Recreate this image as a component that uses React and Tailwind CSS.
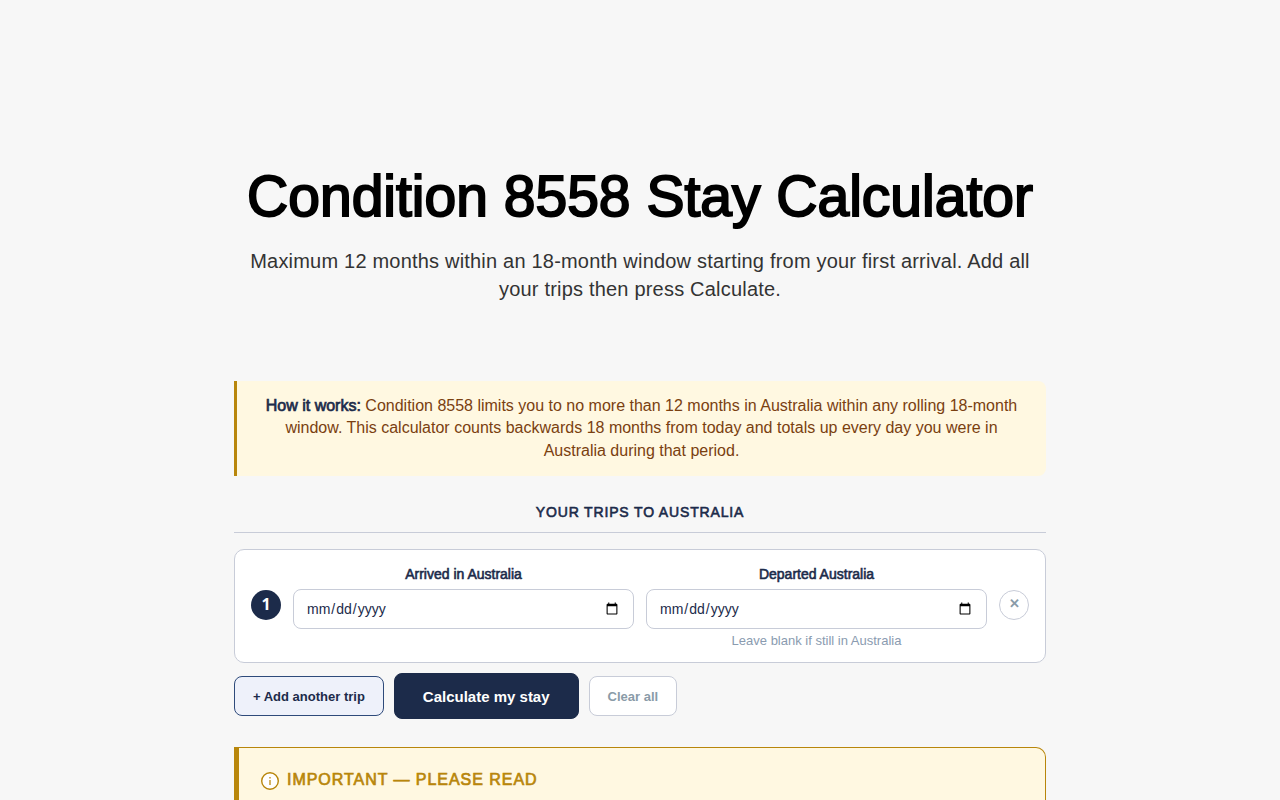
import { useState } from "react";

const DateField = ({ id, label, hint, value, onChange }) => (
    <div className="flex min-w-0 flex-1 flex-col text-center">
        <label htmlFor={id} className="mb-[5px] text-sm leading-5 [-webkit-text-stroke:0.6px]">{label}</label>
        <input
            id={id}
            type="date"
            value={value}
            onChange={onChange}
            className="h-10 w-full rounded-lg border border-[#c8ccd8] bg-white px-3 text-left font-['Liberation_Sans',Arial,sans-serif] text-sm text-[#1c2b4a]"
        />
        <p className="mt-1 h-[15px] text-[13px] leading-[15px] text-[#8a9bb0]">{hint}</p>
    </div>
);

const emptyTrip = { arrived: "", departed: "" };

const App = () => {
    const [trips, setTrips] = useState([emptyTrip]);

    const updateTrip = (index, field, value) => {
        setTrips(trips.map((trip, i) => (i === index ? { ...trip, [field]: value } : trip)));
    };

    const removeTrip = (index) => {
        if (trips.length > 1) setTrips(trips.filter((_, i) => i !== index));
    };

    return (
        <div className="h-screen overflow-hidden bg-[#f7f7f7] font-['Liberation_Sans',Arial,sans-serif] text-[#1c2b4a]">
            <main className="mx-auto max-w-[812px]">
                <header className="pt-40 text-center">
                    <h1 className="text-[57px] leading-[72px] text-black [-webkit-text-stroke:2px]">Condition 8558 Stay Calculator</h1>
                    <p className="mt-[15px] text-xl leading-7 tracking-[0.01em] text-[#333333]">
                        Maximum 12 months within an 18-month window starting from your first arrival. Add all your trips then press Calculate.
                    </p>
                </header>

                <section className="mt-[78px] rounded-r-lg border-l-3 border-[#b8860b] bg-[#fff8e1] px-[18px] py-[14px] text-center text-base leading-[1.4] text-[#7a4010]">
                    <strong className="font-normal text-[#1c2b4a] [-webkit-text-stroke:0.7px]">How it works:</strong>{" "}
                    Condition 8558 limits you to no more than 12 months in Australia within any rolling 18-month window. This calculator counts backwards 18 months from today and totals up every day you were in Australia during that period.
                </section>

                <h2 className="mt-[27px] mb-4 border-b border-[#c8ccd8] pb-[11px] text-center text-sm leading-[18px] tracking-[0.06em] uppercase [-webkit-text-stroke:0.6px]">
                    Your trips to Australia
                </h2>

                <div className="space-y-3">
                    {trips.map((trip, index) => (
                        <div key={index} className="flex items-center gap-3 rounded-[10px] border border-[#c8ccd8] bg-white px-4 py-[14px]">
                            <span className="mb-[2px] flex size-[30px] shrink-0 items-center justify-center rounded-full bg-[#1c2b4a] pb-[2px] font-['Open_Sans',sans-serif] text-base font-bold text-white">
                                {index + 1}
                            </span>
                            <DateField
                                id={`arrived-${index}`}
                                label="Arrived in Australia"
                                value={trip.arrived}
                                onChange={(e) => updateTrip(index, "arrived", e.target.value)}
                            />
                            <DateField
                                id={`departed-${index}`}
                                label="Departed Australia"
                                hint="Leave blank if still in Australia"
                                value={trip.departed}
                                onChange={(e) => updateTrip(index, "departed", e.target.value)}
                            />
                            <button
                                type="button"
                                aria-label="Remove trip"
                                onClick={() => removeTrip(index)}
                                className="mb-[2px] flex size-[30px] shrink-0 items-center justify-center rounded-full border border-[#c8ccd8] bg-white pb-[2px] text-[13px] font-bold text-[#8a9ba8]"
                            >
                                ✕
                            </button>
                        </div>
                    ))}
                </div>

                <div className="mt-[10px] flex items-center gap-[10px]">
                    <button
                        type="button"
                        onClick={() => setTrips([...trips, emptyTrip])}
                        className="h-10 rounded-lg border border-[#2e4a7a] bg-[#eef1fa] px-[18px] pt-[2px] text-[13px] font-bold"
                    >
                        + Add another trip
                    </button>
                    <button type="button" className="h-[46px] rounded-lg border border-[#1c2b4a] bg-[#1c2b4a] px-7 pt-[2px] text-[15px] font-bold text-white">
                        Calculate my stay
                    </button>
                    <button
                        type="button"
                        onClick={() => setTrips([emptyTrip])}
                        className="h-10 rounded-lg border border-[#c8ccd8] bg-white px-[18px] pt-[2px] text-[13px] font-bold text-[#8a9ba8]"
                    >
                        Clear all
                    </button>
                </div>

                <section className="mt-7 h-60 rounded-r-[10px] border border-l-5 border-[#b8860b] bg-[#fff8e1] px-[22px] py-5">
                    <h3 className="flex items-center gap-2 text-base leading-6 tracking-[0.06em] text-[#b8860b] uppercase [-webkit-text-stroke:0.7px]">
                        <svg viewBox="0 0 18 18" className="mt-[2px] size-[18px]" fill="none" stroke="#b8860b">
                            <circle cx="9" cy="9" r="8.3" fill="#ffffff" strokeWidth="1.4" />
                            <path d="M9 8v5" strokeWidth="1.6" opacity="0.8" />
                            <path d="M9 5v1.6" strokeWidth="1.6" opacity="0.8" />
                        </svg>
                        Important — Please read
                    </h3>
                </section>
            </main>
        </div>
    );
};

export default App;
